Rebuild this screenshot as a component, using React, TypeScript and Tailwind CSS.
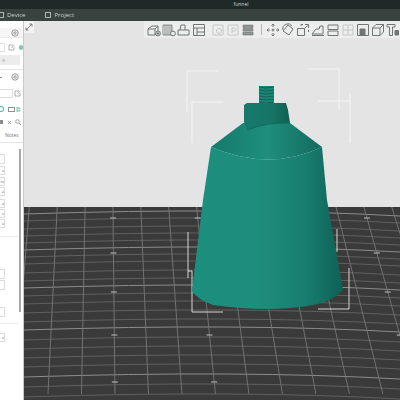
import React from "react";

const S = "#6f7674";
const F = "#c4c8c7";

function Tool({ children, faded, className }: { children: React.ReactNode; faded?: boolean; className?: string }) {
  return (
    <svg viewBox="0 0 14 14" className={`w-[14px] h-[14px] shrink-0 ${className ?? ""}`} fill="none" stroke={faded ? F : S} strokeWidth="1">
      {children}
    </svg>
  );
}

function Gear({ className }: { className?: string }) {
  return (
    <svg viewBox="0 0 8 8" className={`w-[8px] h-[8px] ${className ?? ""}`} fill="none" stroke="#8b8f8e" strokeWidth="0.9">
      <circle cx="4" cy="4" r="3.2" />
      <circle cx="4" cy="4" r="1.2" />
    </svg>
  );
}

function Edit() {
  return (
    <svg viewBox="0 0 7 7" className="w-[7px] h-[7px]" fill="none" stroke="#9a9e9d" strokeWidth="0.8">
      <path d="M5 1H1v5h5V3M3.5 4 6.3.8" />
    </svg>
  );
}

function ValueBox({ mt, h = 9, text }: { mt: string; h?: number; text?: string }) {
  return (
    <div className={`${mt} w-[5px] border border-l-0 border-[#dcdcdc] rounded-r-[1px] flex items-center justify-end overflow-hidden`} style={{ height: h }}>
      {text && <span className="text-[4px] leading-none text-[#555]">{text}</span>}
    </div>
  );
}

function Sidebar() {
  return (
    <aside className="w-[24px] shrink-0 h-full bg-white border-r border-[#c9c9c9] flex flex-col overflow-hidden font-['Open_Sans',sans-serif]">
      <div className="h-[7px] bg-white" />
      <div className="h-[10px] bg-[#f6f6f6] flex items-center justify-end pr-[4px] border-b border-[#ececec]">
        <Gear />
      </div>
      <div className="h-[13px] mt-[3px] flex items-center">
        <div className="w-[5px] h-[9px] border border-l-0 border-[#e3e3e3]" />
        <div className="ml-[3px]"><Edit /></div>
        <div className="ml-[4px] w-[5px] h-[5px] rounded-full bg-[#7fc7b6]" />
      </div>
      <div className="h-[10px] mt-[1px] w-[20px] bg-[#ececec] flex items-center justify-end pr-[15px]">
        <span className="text-[5px] leading-none text-[#a5a5a5]">e</span>
      </div>
      <div className="h-[5px] border-b border-[#e8e8e8]" />
      <div className="h-[10px] mt-[2px] flex items-center justify-between pr-[4px]">
        <span className="block w-[2px] h-px bg-[#888]" />
        <Gear />
      </div>
      <div className="h-[9px] mt-[7px] flex items-center">
        <div className="w-[13px] h-[9px] border border-l-0 border-[#dedede] rounded-r-[1px]" />
        <div className="ml-[1px]"><Edit /></div>
      </div>
      <div className="h-[8px] mt-[7px] flex items-center">
        <div className="w-[4px] h-[6px] rounded-r-full border border-l-0 border-[#58b79f]" />
        <div className="ml-[4px] w-[7px] h-[5px] border border-[#8f9493]" />
        <svg viewBox="0 0 5 5" className="ml-[1px] w-[5px] h-[5px]" fill="none" stroke="#58b79f" strokeWidth="0.8"><path d="M1 0v5M1 1h3L3 2.5 4 4H1" /></svg>
      </div>
      <div className="h-[8px] mt-[5px] flex items-center">
        <div className="w-[3px] h-[4px] bg-[#8d8d8d]" />
        <svg viewBox="0 0 5 5" className="ml-[4px] w-[5px] h-[5px]" fill="none" stroke="#8a8a8a" strokeWidth="0.8"><path d="m1 1 3 3M4 1 1 4" /></svg>
        <svg viewBox="0 0 6 6" className="ml-[3px] w-[6px] h-[6px]" fill="none" stroke="#8a8a8a" strokeWidth="0.8"><circle cx="2.5" cy="2.5" r="1.8" /><path d="m4 4 2 2" /></svg>
      </div>
      <div className="h-[6px] mt-[6px] pl-[5px] flex items-center">
        <span className="text-[5px] leading-none text-[#777]">Notes</span>
      </div>
      <div className="mt-[4px] h-px bg-[#e6e6e6]" />
      <div className="flex-1 flex min-h-0">
        <div className="w-[19px] flex flex-col">
          <ValueBox mt="mt-[11px]" h={10} />
          <ValueBox mt="mt-[2px]" h={9} text="s" />
          <ValueBox mt="mt-[2px]" h={9} text="rs" />
          <ValueBox mt="mt-[1px]" h={9} text="a" />
          <ValueBox mt="mt-[3px]" h={9} text="a" />
          <ValueBox mt="mt-[1px]" h={9} text="s" />
          <ValueBox mt="mt-[1px]" h={9} text="s" />
          <div className="h-px mt-[8px] bg-[#eeeeee]" />
          <div className="h-[30px] mt-[32px] flex flex-col gap-[1px]">
            <ValueBox mt="mt-0" h={10} />
            <ValueBox mt="mt-0" h={10} />
          </div>
          <ValueBox mt="mt-[8px]" h={10} />
          <div className="h-px mt-[6px] bg-[#eeeeee]" />
          <ValueBox mt="mt-[9px]" h={9} text="s" />
        </div>
        <div className="w-[2px] h-[163px] mt-[6px] bg-[#a9a9a9]" />
      </div>
    </aside>
  );
}

function Toolbar() {
  return (
    <div className="h-[17px] ml-[120px] bg-[#ededed] flex items-center pl-[3px] gap-[1px] overflow-hidden">
      <Tool><path d="M1 6 5 3h6v6l-3 3H1zM1 6h7v6M8 6l3-3" /><circle cx="11" cy="10.5" r="2.4" fill="#ededed" /><path d="M9.5 10.5h3M11 9v3" /></Tool>
      <Tool><path d="M1 2h9v10H1zM3 2v10M5 2v10M7 2v10M9 2v10" strokeWidth="0.8" /><circle cx="11" cy="10.5" r="2.4" fill="#ededed" /></Tool>
      <Tool><path d="M1 12h11V7H8V2H4L3 7H1z" /><path d="M3 7h5" /></Tool>
      <Tool><path d="M1.5 1.5h11v11h-11zM1.5 5h11M5 5v7M5 9h7.5" /></Tool>
      <div className="w-[3px] shrink-0" />
      <Tool faded><path d="M2 2h10v10H2z" /><circle cx="8" cy="8" r="2.5" /></Tool>
      <Tool faded><path d="M2 2h10v10H2zM6 10V5h2.5a1.5 1.5 0 0 1 0 3H6" /></Tool>
      <Tool><path d="M2 2h10v2.5H2zM2 5.500h10V8H2zM2 9h10v3H2z" fill="#8f9493" strokeWidth="0.6" /></Tool>
      <div className="w-[1px] h-[11px] ml-[5px] mr-[3px] bg-[#b5b8b7] shrink-0" />
      <Tool><path d="M7 1v3M7 10v3M1 7h3M10 7h3M5.500 2.500 7 1l1.500 1.500M5.500 11.500 7 13l1.500-1.500M2.500 5.500 1 7l1.500 1.500M11.500 5.500 13 7l-1.500 1.500" /><circle cx="7" cy="7" r="1" /></Tool>
      <Tool><path d="M7 2 12 6 8 12 2 8z" /><path d="M2 7a5 5 0 0 1 9-4" /></Tool>
      <Tool><path d="M1.500 5.500h7v7h-7zM5 3V1.500h2M9 1.500h3.500V5M12.500 7v2" /><path d="m8.500 5.500 3-3" /></Tool>
      <Tool><path d="M1 11 5 6h3l1-3h3v8zM1 12.500h12" /></Tool>
      <Tool><path d="M2 2h10v4.500H2zM2 8h10v4.500H2z" /></Tool>
      <Tool faded><path d="M2 2h10v10H2zM2 7h10M7 2v10" /></Tool>
      <Tool><path d="M1.500 1.500h11v11h-11z" /><path d="M4 6h5v6.500H4z" fill="#6f7674" /></Tool>
      <Tool><path d="M1.500 5 5 1.500h7.500V9L9 12.500H1.500zM1.500 5H9v7.500M9 5l3.500-3.500" /></Tool>
      <Tool><path d="M1 1.500h8v2.500H6.500v8.500h-3V4H1z" /><path d="M9 7.500h3.500V12H9z" fill="#6f7674" /></Tool>
      <Tool><path d="M3 4h11v6H3z" /></Tool>
    </div>
  );
}

const hY = [211, 218, 226, 233, 240, 247, 254, 261, 270, 278, 285, 293, 301, 310, 319, 327, 337, 346, 355, 364, 374, 384, 394];
const bright = new Set([211, 247, 285, 327, 374]);
const vX = Array.from({ length: 16 }, (_, i) => 29 + 28 * i);
const vp = (x0: number, y: number) => 103 + (x0 - 103) * (1 + (y - 211) / 933);

function Scene() {
  return (
    <svg viewBox="24 21 376 379" className="absolute inset-0 w-full h-full">
      <defs>
        <linearGradient id="body" x1="0" x2="1" y1="0" y2="0">
          <stop offset="0" stopColor="#1b8f7f" />
          <stop offset="0.45" stopColor="#1f8d7c" />
          <stop offset="0.75" stopColor="#187e6f" />
          <stop offset="1" stopColor="#0f6055" />
        </linearGradient>
        <linearGradient id="shoulder" x1="0" x2="1" y1="0" y2="0">
          <stop offset="0" stopColor="#15796b" />
          <stop offset="0.5" stopColor="#1f8f7d" />
          <stop offset="1" stopColor="#126a5e" />
        </linearGradient>
        <linearGradient id="tab" x1="0" x2="1" y1="0" y2="0">
          <stop offset="0" stopColor="#157a6c" />
          <stop offset="0.6" stopColor="#167567" />
          <stop offset="1" stopColor="#0f5f54" />
        </linearGradient>
      </defs>
      {hY.map((y) => (
        <path key={y} d={`M24 ${y + 3}Q240 ${y - 4} 400 ${y + 5}`} fill="none" stroke={bright.has(y) ? "#8c8c8c" : "#6a6a6a"} strokeWidth={bright.has(y) ? 1 : 0.8} />
      ))}
      {vX.map((x) => (
        <line key={x} x1={vp(x, 207)} y1={207} x2={vp(x, 394)} y2={394} stroke="#777" strokeWidth="0.9" />
      ))}
      {[113, 197, 365].flatMap((x) =>
        [218, 253, 292, 335, 382].map((y) => (
          <line key={`${x}-${y}`} x1={vp(x, y) - 3} y1={y} x2={vp(x, y) + 3} y2={y} stroke="#aaa" strokeWidth="1.2" />
        ))
      )}
      <g fill="none" stroke="#f7f7f7" strokeWidth="0.9">
        <path d="M218 71H187V112M223 102H192V143M308 69H339V110M318 101H350M350 93V143" />
        <path d="M188 232V278M188 271H192M192 271V312H223M337 229V252M349 268V309H318" stroke="#e8e8e8" />
      </g>
      <path d="M211 147 243 123 290 123 322 147Q270 172 211 147Z" fill="url(#shoulder)" />
      <path d="M211 147Q270 172 322 147L327 200 343 290Q330 303 313 305 270 313 213 305 198 300 192 291L203 200Z" fill="url(#body)" />
      <path d="M259 86H274V106H259Z" fill="#1c8676" />
      {[87, 90, 93, 96, 99, 102, 105].map((y) => (
        <path key={y} d={`M259 ${y}Q266 ${y + 2} 274 ${y}`} fill="none" stroke="#0f5f54" strokeWidth="0.9" />
      ))}
      <path d="M244 105 247 103H286L288 110 290 123Q268 122 247 130L244 122Z" fill="url(#tab)" />
      <path d="M247 130Q268 122 290 123" fill="none" stroke="#0f6a5d" strokeWidth="0.8" />
    </svg>
  );
}

export default function App() {
  return (
    <div className="w-[400px] h-[400px] flex flex-col overflow-hidden font-['Open_Sans',sans-serif]">
      <header className="h-[9px] bg-[#1f2928] flex items-center justify-center shrink-0 pl-[82px]">
        <span className="text-[5px] leading-none text-[#d5d9d8]">funnel</span>
      </header>
      <nav className="h-[12px] bg-[#38423f] flex items-center shrink-0 text-[6px] text-[#cdd3d1]">
        <div className="w-[4px] h-[6px] border border-l-0 border-[#aeb5b3]" />
        <span className="ml-[3px] leading-none">Device</span>
        <div className="ml-[20px] w-[6px] h-[6px] border border-[#aeb5b3]" />
        <span className="ml-[3px] leading-none">Project</span>
      </nav>
      <main className="flex-1 flex min-h-0">
        <Sidebar />
        <div className="relative flex-1 flex flex-col bg-[#e4e4e4]">
          <div className="h-[186px] shrink-0" />
          <div className="flex-1 bg-[#3a3a3a]" />
          <Scene />
          <div className="absolute inset-x-0 top-0">
            <Toolbar />
          </div>
          <div className="absolute left-0 top-0 w-[10px] h-[12px] bg-[#f3f3f3] flex items-center justify-center">
            <svg viewBox="0 0 8 8" className="w-[8px] h-[8px]" fill="none" stroke="#6f7674" strokeWidth="0.9"><path d="M1 7l6-6M1 4.500V7h2.500M4.500 1H7v2.500" /></svg>
          </div>
        </div>
      </main>
    </div>
  );
}
